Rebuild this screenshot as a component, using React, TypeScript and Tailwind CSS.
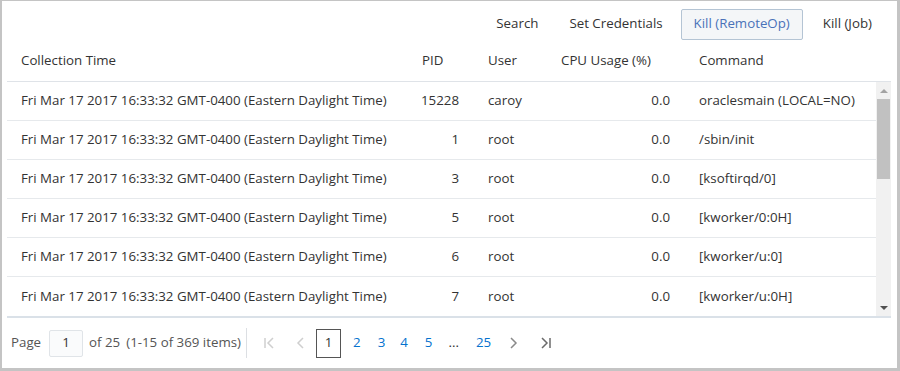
const rows = [
  { pid: "15228", user: "caroy", cmd: "oraclesmain (LOCAL=NO)" },
  { pid: "1", user: "root", cmd: "/sbin/init" },
  { pid: "3", user: "root", cmd: "[ksoftirqd/0]" },
  { pid: "5", user: "root", cmd: "[kworker/0:0H]" },
  { pid: "6", user: "root", cmd: "[kworker/u:0]" },
  { pid: "7", user: "root", cmd: "[kworker/u:0H]" },
];

const time = "Fri Mar 17 2017 16:33:32 GMT-0400 (Eastern Daylight Time)";

function Chevron({ dir, bar, color }: { dir: "l" | "r"; bar?: boolean; color: string }) {
  return (
    <svg width="12" height="14" viewBox="0 0 12 14" fill="none" stroke={color} strokeWidth="1.5">
      {dir === "l" ? (
        <>
          {bar && <path d="M2 2v10" />}
          <path d={bar ? "M10 2L5 7l5 5" : "M8 2L3 7l5 5"} />
        </>
      ) : (
        <>
          <path d={bar ? "M2 2l5 5-5 5" : "M4 2l5 5-5 5"} />
          {bar && <path d="M10 2v10" />}
        </>
      )}
    </svg>
  );
}

export default function App() {
  return (
    <div className="w-[900px] h-[371px] flex flex-col bg-white border-l-2 border-t border-r-[3px] border-b-[3px] border-[#c4c4c4] font-['Segoe_UI','Open_Sans',sans-serif] text-[13.3px] text-[#333]">
      <div className="flex justify-end items-center gap-[5px] pt-[7px] pr-[12px] h-[39px]">
        <button className="h-[31px] px-[13px] text-[#333]">Search</button>
        <button className="h-[31px] px-[13px] text-[#333]">Set Credentials</button>
        <button className="h-[31px] px-[12px] rounded-[2px] border border-[#b4c4d4] bg-[#f4f6f8] text-[#4a72b8]">
          Kill (RemoteOp)
        </button>
        <button className="h-[31px] pl-[15px] pr-[13px] text-[#333]">Kill (Job)</button>
      </div>

      <div className="flex-1 flex flex-col ml-[5px] mr-[6px]">
        <div className="flex items-center h-[42px] border-b border-[#dfe3e8]">
          <div className="w-[401px] pl-[14px]">Collection Time</div>
          <div className="w-[66px] pl-[14px]">PID</div>
          <div className="w-[73px] pl-[14px]">User</div>
          <div className="w-[138px] pl-[14px]">CPU Usage (%)</div>
          <div className="flex-1 pl-[14px]">Command</div>
        </div>

        <div className="flex h-[234px]">
          <div className="flex-1 flex flex-col">
            {rows.map((r, i) => (
              <div
                key={i}
                className={`flex items-center h-[39px] ${i < rows.length - 1 ? "border-b border-[#e6e9ec]" : ""}`}
              >
                <div className="w-[401px] pl-[14px] whitespace-nowrap">{time}</div>
                <div className="w-[66px] pr-[15px] text-right">{r.pid}</div>
                <div className="w-[73px] pl-[14px]">{r.user}</div>
                <div className="w-[138px] pr-[15px] text-right">0.0</div>
                <div className="flex-1 pl-[14px] whitespace-nowrap">{r.cmd}</div>
              </div>
            ))}
          </div>
          <div className="w-[15px] bg-[#f1f1f1] flex flex-col items-center">
            <div className="h-[17px] flex items-center justify-center">
              <div className="w-0 h-0 border-l-[4px] border-r-[4px] border-b-[4px] border-l-transparent border-r-transparent border-b-[#a3a3a3]" />
            </div>
            <div className="w-[13px] h-[80px] bg-[#c1c1c1]" />
            <div className="flex-1" />
            <div className="h-[17px] flex items-center justify-center">
              <div className="w-0 h-0 border-l-[4px] border-r-[4px] border-t-[4px] border-l-transparent border-r-transparent border-t-[#505050]" />
            </div>
          </div>
        </div>

        <div className="flex-1 flex items-center border-t-2 border-[#dae1e8] pl-[4px]">
          <span className="text-[#555]">Page</span>
          <div className="ml-[8px] w-[34px] h-[27px] border border-[#e0e4e8] bg-[#fafbfc] rounded-[2px] flex items-center justify-center">
            1
          </div>
          <span className="ml-[6px] text-[#555]">of 25</span>
          <span className="ml-[6px] text-[#555]">(1-15 of 369 items)</span>
          <div className="ml-[5px] w-px h-[30px] bg-[#dcdfe3]" />
          <div className="ml-[16px] flex items-center">
            <Chevron dir="l" bar color="#cfcfcf" />
          </div>
          <div className="ml-[20px] flex items-center">
            <Chevron dir="l" color="#cfcfcf" />
          </div>
          <div className="ml-[9px] w-[25px] h-[29px] border border-[#555] flex items-center justify-center text-[#333]">
            1
          </div>
          <div className="flex items-center text-[#0572ce]">
            <span className="ml-[12px]">2</span>
            <span className="ml-[17px]">3</span>
            <span className="ml-[15px]">4</span>
            <span className="ml-[17px]">5</span>
            <span className="ml-[16px] text-[#333]">...</span>
            <span className="ml-[17px]">25</span>
          </div>
          <div className="ml-[16px] flex items-center">
            <Chevron dir="r" color="#8a8a8a" />
          </div>
          <div className="ml-[21px] flex items-center">
            <Chevron dir="r" bar color="#6b6b6b" />
          </div>
        </div>
      </div>
    </div>
  );
}
